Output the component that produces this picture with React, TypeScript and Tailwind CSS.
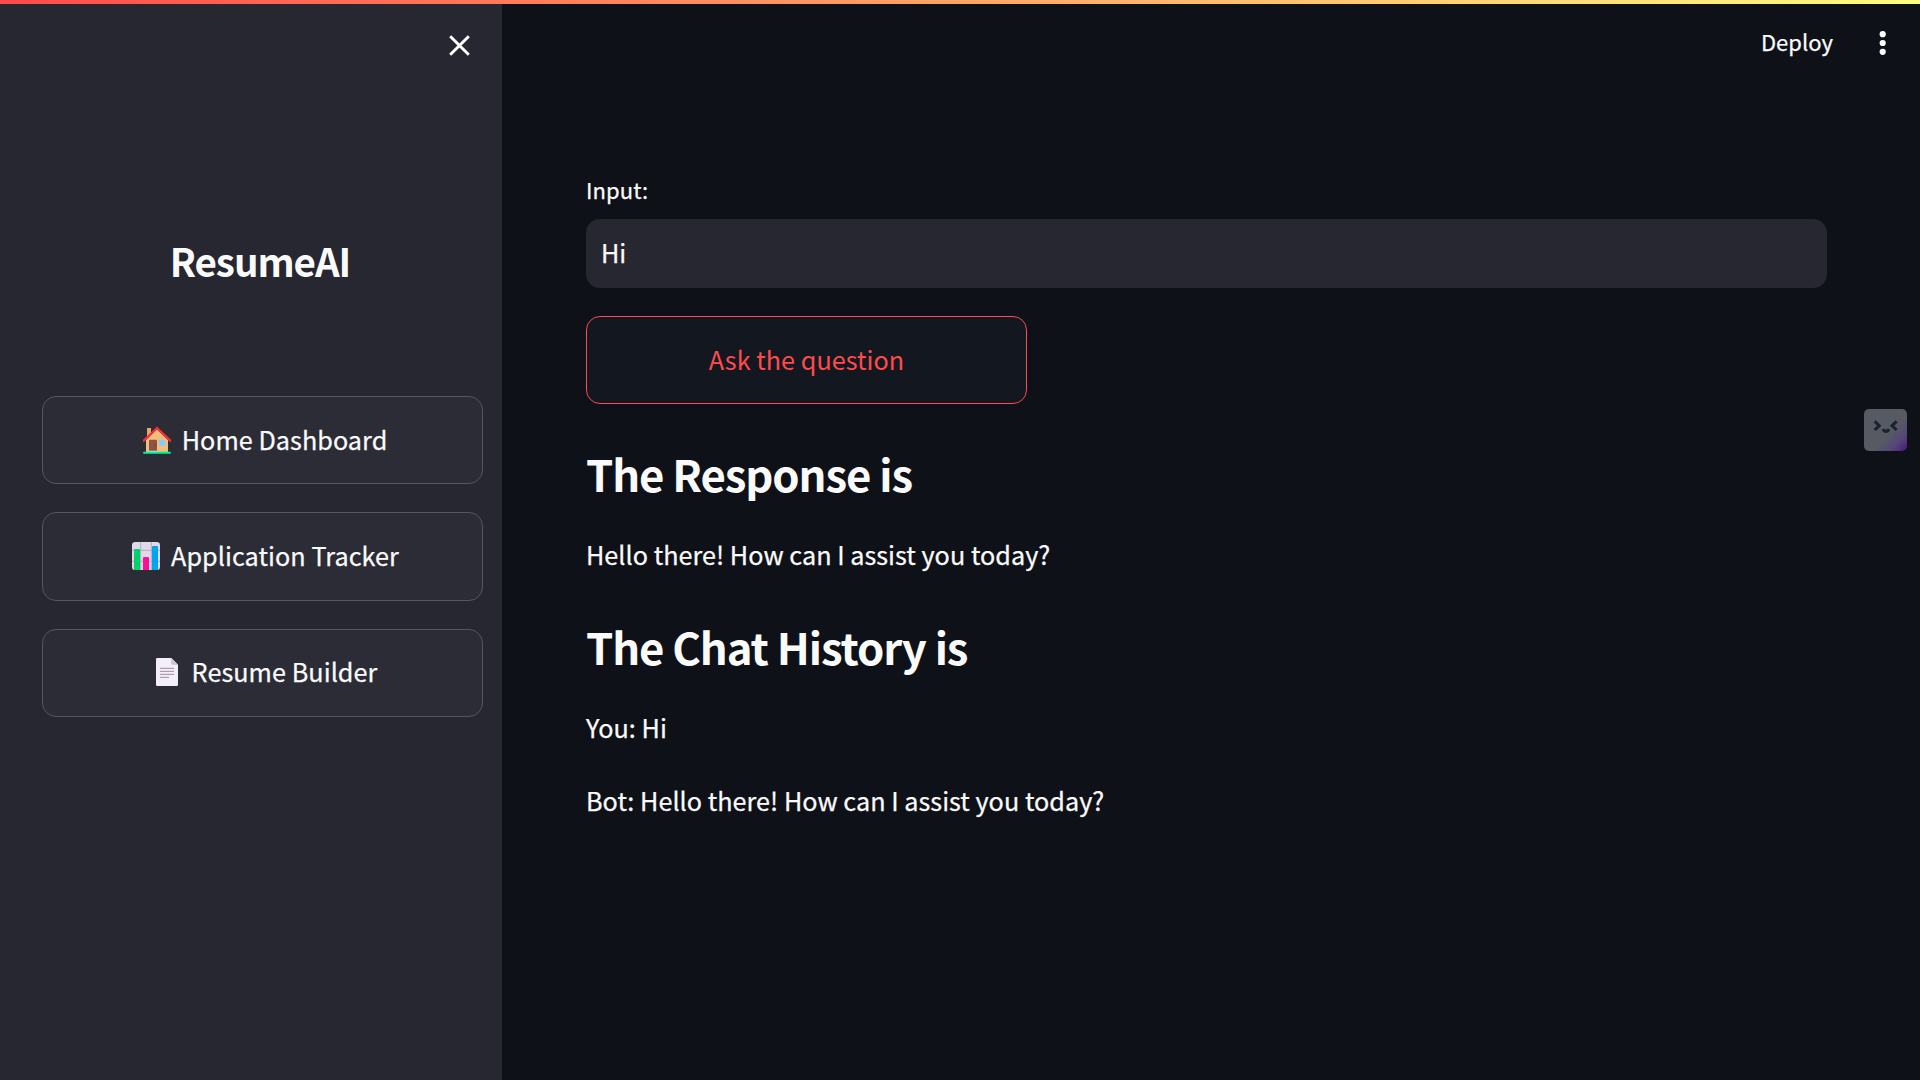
import type { ReactNode } from "react";

function HouseIcon() {
  return (
    <svg className="h-7 w-7 shrink-0" viewBox="69 46 84 84">
      <path d="M81 52h12v24H81z" fill="#e0a968" />
      <path d="M78 88 111 56l33 32v36H78z" fill="#f3bd7c" />
      <path d="M71 90 111 52l40 38" fill="none" stroke="#f8312f" strokeWidth="7" strokeLinecap="round" />
      <path d="M87 119h24v5H87z" fill="#d3d3e0" />
      <rect x="87" y="87" width="24" height="33" rx="2" fill="#8c5543" />
      <circle cx="106" cy="103" r="1.8" fill="#4a2a22" />
      <rect x="117" y="87" width="19" height="18" rx="1" fill="#83cbff" />
      <rect x="69" y="123" width="84" height="6" rx="3" fill="#00f397" />
    </svg>
  );
}

function ChartIcon() {
  return (
    <svg className="h-7 w-7 shrink-0" viewBox="0 0 84 84">
      <defs>
        <clipPath id="chart-card">
          <rect width="84" height="84" rx="10" />
        </clipPath>
      </defs>
      <g clipPath="url(#chart-card)">
        <rect width="84" height="84" fill="#e1d8ec" />
        <path d="M26 0v84M58 0v84M0 25h84M0 58h84" stroke="#b4acbc" strokeWidth="3" />
        <path d="M6 24q0-3 3-3h12q3 0 3 3v60H6z" fill="#00d26a" />
        <path d="M33 48q0-3 3-3h12q3 0 3 3v36H33z" fill="#fc0f92" />
        <path d="M60 15q0-3 3-3h12q3 0 3 3v69H60z" fill="#00a6ed" />
      </g>
    </svg>
  );
}

function PageIcon() {
  return (
    <svg className="h-7 w-[22px] shrink-0" viewBox="0 0 66 84">
      <path d="M4 0h42l20 20v60q0 4-4 4H4q-4 0-4-4V4q0-4 4-4z" fill="#f3eef8" />
      <path d="M46 0 66 20H49q-4 0-4-4z" fill="#cdc4d6" />
      <path d="M12 31h42M12 40h42M12 49h42M12 58h27" stroke="#998ea4" strokeWidth="3" />
    </svg>
  );
}

function NavButton({ icon, layout, size, children }: { icon: ReactNode; layout: string; size: string; children: ReactNode }) {
  return (
    <button className={`flex w-[441px] items-center justify-center rounded-[14px] border border-[#55565f] bg-[#2b2c36] text-[25.2px] leading-[42px] tracking-[0.06px] ${size}`}>
      <span className={`flex items-center ${layout}`}>
        {icon}
        <span className="pb-[2px] whitespace-nowrap">{children}</span>
      </span>
    </button>
  );
}

function FaceBadge() {
  return (
    <div className="absolute left-[1864px] top-[409px] h-[42px] w-[43px] rounded-[5px] bg-[linear-gradient(135deg,#575a62_0%,#575a62_60%,#54467a_80%,#4a2378_96%)]">
      <svg className="h-full w-full" viewBox="0 0 129 126" fill="none" stroke="#1a2230" strokeWidth="9">
        <path d="M32 37 46 50 32 63M98 37 84 50l14 13" />
        <path d="M58 60q1 7 8 7t8-7" />
      </svg>
    </div>
  );
}

export default function App() {
  return (
    <div className="relative flex h-[1080px] w-[1920px] flex-col overflow-hidden bg-[#0e1117] font-['Noto_Sans_CJK_SC',sans-serif] text-[25.2px] tracking-[0.03px] text-[#fafafa] [-webkit-text-stroke:0.25px]">
      <div className="h-1 shrink-0 bg-[linear-gradient(90deg,#ff4b4b,#fffd80)]" />
      <div className="flex min-h-0 flex-1">
        <aside className="flex w-[502px] shrink-0 flex-col bg-[#262730] pl-[42px]">
          <div className="flex h-[83px] justify-end pr-[32px] pt-[31px]">
            <svg className="h-[21px] w-[21px]" viewBox="0 0 21 21" stroke="#fff" strokeWidth="2.9">
              <path d="M1.2 1.2 19.8 19.8M19.8 1.2 1.2 19.8" />
            </svg>
          </div>
          <h1 className="mt-[143px] w-[436px] text-center text-[38.6px] leading-[60px] font-semibold tracking-[-1.05px] [-webkit-text-stroke:0]">ResumeAI</h1>
          <nav className="mt-[106px] flex flex-col gap-7">
            <NavButton icon={<HouseIcon />} layout="ml-[5px] gap-[11px]" size="h-[88px]">Home Dashboard</NavButton>
            <NavButton icon={<ChartIcon />} layout="ml-[6px] gap-[11px]" size="h-[89px] pb-[1px]">Application Tracker</NavButton>
            <NavButton icon={<PageIcon />} layout="ml-[8px] gap-[14px]" size="h-[88px] pb-[2px]">Resume Builder</NavButton>
          </nav>
        </aside>
        <main className="flex min-w-0 flex-1 flex-col">
          <header className="flex h-[78px] items-center justify-end pr-[33px]">
            <span className="pb-[4px] text-[22px] leading-[30px]">Deploy</span>
            <svg className="ml-[46px] h-[24px] w-[8px]" viewBox="0 0 8 24" fill="#fff">
              <circle cx="3.7" cy="3.2" r="3.1" />
              <circle cx="3.7" cy="12" r="3.1" />
              <circle cx="3.7" cy="20.8" r="3.1" />
            </svg>
          </header>
          <div className="flex flex-col pl-[84px] pr-[93px]">
            <label className="mt-[91px] text-[22px] leading-[32px] tracking-[0.1px]">Input:</label>
            <div className="mt-[14px] flex h-[69px] items-center rounded-[14px] bg-[#262730] pb-[2px] pl-[15px]">Hi</div>
            <button className="mt-7 h-[88px] w-[441px] rounded-[14px] border border-[#ff4b4b] bg-[#131720] text-[#ff4b4b] [-webkit-text-stroke:0]">
              Ask the question
            </button>
            <h2 className="mt-[38.5px] text-[43.7px] leading-[60px] font-semibold tracking-[-1.08px] [-webkit-text-stroke:0]">The Response is</h2>
            <p className="mt-[29px] leading-[45px]">Hello there! How can I assist you today?</p>
            <h2 className="mt-[39px] text-[43.7px] leading-[60px] font-semibold tracking-[-1.08px] [-webkit-text-stroke:0]">The Chat History is</h2>
            <p className="mt-[29px] leading-[45px]">You: Hi</p>
            <p className="mt-7 leading-[45px]">Bot: Hello there! How can I assist you today?</p>
          </div>
        </main>
      </div>
      <FaceBadge />
    </div>
  );
}
